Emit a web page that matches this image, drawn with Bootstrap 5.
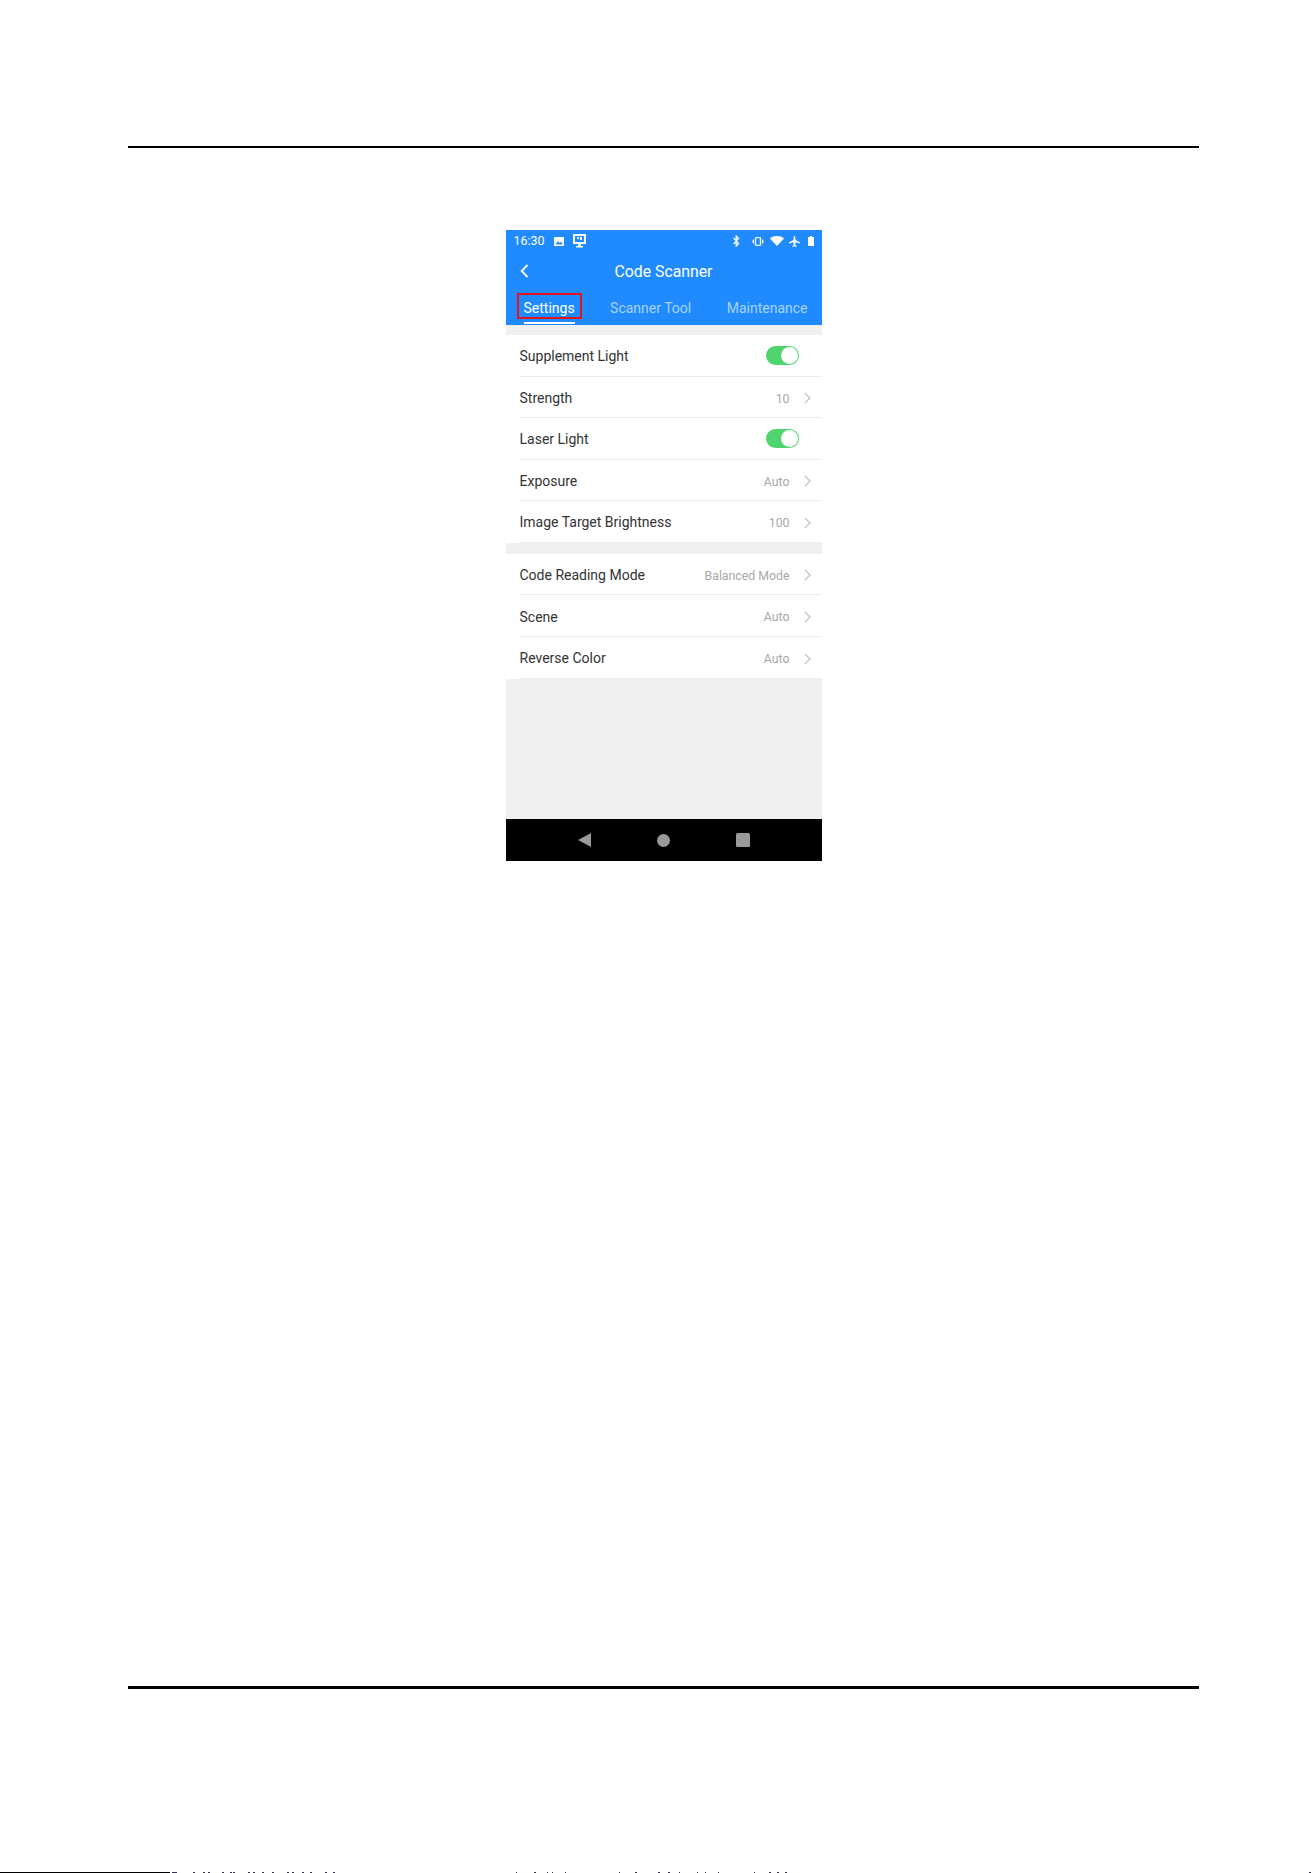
<!DOCTYPE html>
<html lang="en">
<head>
    <meta charset="UTF-8">
    <meta name="viewport" content="width=device-width, initial-scale=1.0">
    <title>Code Scanner</title>
    <link href="https://cdn.jsdelivr.net/npm/bootstrap@5.3.3/dist/css/bootstrap.min.css" rel="stylesheet">
    <style>
        html, body { height: 1873px; overflow: hidden; }
        body { background: #fff; font-family: Roboto, "Liberation Sans", sans-serif; }
        .page-sheet { height: 1873px; padding: 146px 114px 0 128px; }
        .page-rule { height: 3px; background: #000; flex: none; }
        .page-rule-top { height: 2px; margin-bottom: 82px; }
        .page-rule-bottom { margin-top: auto; margin-bottom: 183px; }
        .page-edge { margin: 0 -114px 0 -128px; height: 1px; flex: none; }
        .page-edge svg { display: block; }

        .phone { width: 316px; height: 631px; background: #f0f0f0; flex: none; }
        .phone-head { background: #1f8bff; color: #fff; height: 95px; }
        .status-bar { height: 22px; padding: 0 8px; font-size: 12.4px; }
        .status-time { margin-right: 10px; }
        .status-screen { margin-left: 9px; }
        .status-right { margin-left: auto; }
        .status-vibrate { margin-left: 12px; }
        .status-wifi { margin-left: 6px; }
        .status-plane { margin-left: 5px; }
        .status-battery { margin-left: 8px; }
        .title-bar { height: 40px; font-size: 15.8px; }
        .back-btn { left: 14px; top: 50%; margin-top: -8px; width: 9px; height: 14px; }
        .tab-bar { height: 33px; padding: 0 14px 0 18px; font-size: 14px; }
        .tab-item { color: #a9d2ff; }
        .tab-active { color: #fff; }
        .tab-active::after { content: ""; position: absolute; left: 0; right: 0; bottom: -5px; height: 2px; background: #fff; }
        .tab-mark { left: -7px; right: -7px; top: -5px; bottom: 0; border: 2px solid #e3141c; }

        .set-group { background: #fff; margin-top: 10px; }
        .set-group + .set-group { margin-top: 11px; }
        .set-group + .set-group .set-row { height: 41.7px; }
        .set-row { height: 41.5px; padding-left: 14px; font-size: 14px; color: #333; }
        .set-row-inner { height: 100%; border-bottom: 1px solid #ececec; padding-right: 11px; padding-top: 3px; }
        .set-value { color: #a8a8a8; font-size: 12.3px; margin-right: 14px; margin-left: auto; padding-top: 1px; }
        .set-arrow { width: 7px; height: 12px; display: block; }
        .toggle-on { width: 33px; height: 19px; border-radius: 10px; background: #4fd56f; margin: -2px 12px 0 auto; padding: 1px; }
        .toggle-knob { width: 17px; height: 17px; border-radius: 50%; background: #fff; margin-left: auto; }

        .nav-strip { height: 42px; background: #000; margin-top: auto; }
        .nav-key { width: 79px; }
    </style>
</head>
<body>
    <div class="page-sheet d-flex flex-column">
        <div class="page-rule page-rule-top"></div>

        <div class="d-flex justify-content-center">
            <div class="phone d-flex flex-column">
                <!-- blue header -->
                <div class="phone-head">
                    <div class="status-bar d-flex align-items-center">
                        <span class="status-time">16:30</span>
                        <svg width="10" height="9" viewBox="0 0 10 9"><rect width="10" height="9" rx="1" fill="#fff"/><path d="M1.5 7.5 4 4l1.6 2L7 4.6l1.6 2.9z" fill="#1f8bff"/></svg>
                        <svg class="status-screen" width="13" height="14" viewBox="0 0 13 14"><path d="M0 0h13v10H8v2h2v1.5H3V12h2v-2H0z" fill="#fff"/><rect x="2" y="2" width="9" height="6" fill="#1f8bff"/><path d="M4 3h2v2H4zM7 3h2v3H7z" fill="#fff"/></svg>
                        <div class="status-right d-flex align-items-center">
                            <svg width="7" height="12" viewBox="0 0 7 12"><path d="M.6 3l5 5.4L3.2 11V1l2.4 2.6L.6 9" fill="none" stroke="#fff" stroke-width="1.2"/></svg>
                            <svg class="status-vibrate" width="12" height="9" viewBox="0 0 12 9"><rect x="3.5" y=".7" width="5" height="7.6" rx=".7" fill="none" stroke="#fff" stroke-width="1.3"/><path d="M1.5 2.5v4M0 3.5v2M10.5 2.5v4M12 3.5v2" stroke="#fff" stroke-width="1"/></svg>
                            <svg class="status-wifi" width="14" height="10" viewBox="0 0 14 10"><path d="M0 2.4C3.8-.8 10.2-.8 14 2.4L7 10z" fill="#fff"/></svg>
                            <svg class="status-plane" width="11" height="11" viewBox="0 0 11 11"><path d="M5 0h1l.6 4L11 6.4v1.200L6.600 6.300 6.300 9l1.300 1v1l-2.100-.7-2.100.7v-1l1.300-1-.3-2.700L0 7.600V6.400L4.400 4z" fill="#fff"/></svg>
                            <svg class="status-battery" width="6" height="10" viewBox="0 0 6 10"><path d="M2 0h2v1h2v9H0V1h2z" fill="#fff"/></svg>
                        </div>
                    </div>
                    <div class="title-bar position-relative d-flex align-items-center justify-content-center">
                        <svg class="back-btn position-absolute" viewBox="0 0 9 14"><path d="M7.500 1 1.700 7l5.800 6" fill="none" stroke="#fff" stroke-width="1.800"/></svg>
                        <span>Code Scanner</span>
                    </div>
                    <div class="tab-bar d-flex align-items-center justify-content-between">
                        <span class="tab-item tab-active position-relative">Settings<span class="tab-mark position-absolute"></span></span>
                        <span class="tab-item">Scanner Tool</span>
                        <span class="tab-item">Maintenance</span>
                    </div>
                </div>

                <!-- first group -->
                <div class="set-group">
                    <div class="set-row"><div class="set-row-inner d-flex align-items-center"><span>Supplement Light</span><div class="toggle-on"><div class="toggle-knob"></div></div></div></div>
                    <div class="set-row"><div class="set-row-inner d-flex align-items-center"><span>Strength</span><span class="set-value">10</span><svg class="set-arrow" viewBox="0 0 7 12"><path d="M.8.8 6 6 .8 11.200" fill="none" stroke="#bdbdbd" stroke-width="1.200"/></svg></div></div>
                    <div class="set-row"><div class="set-row-inner d-flex align-items-center"><span>Laser Light</span><div class="toggle-on"><div class="toggle-knob"></div></div></div></div>
                    <div class="set-row"><div class="set-row-inner d-flex align-items-center"><span>Exposure</span><span class="set-value">Auto</span><svg class="set-arrow" viewBox="0 0 7 12"><path d="M.8.8 6 6 .8 11.200" fill="none" stroke="#bdbdbd" stroke-width="1.200"/></svg></div></div>
                    <div class="set-row"><div class="set-row-inner d-flex align-items-center"><span>Image Target Brightness</span><span class="set-value">100</span><svg class="set-arrow" viewBox="0 0 7 12"><path d="M.8.8 6 6 .8 11.200" fill="none" stroke="#bdbdbd" stroke-width="1.200"/></svg></div></div>
                </div>

                <!-- second group -->
                <div class="set-group">
                    <div class="set-row"><div class="set-row-inner d-flex align-items-center"><span>Code Reading Mode</span><span class="set-value">Balanced Mode</span><svg class="set-arrow" viewBox="0 0 7 12"><path d="M.8.8 6 6 .8 11.200" fill="none" stroke="#bdbdbd" stroke-width="1.200"/></svg></div></div>
                    <div class="set-row"><div class="set-row-inner d-flex align-items-center"><span>Scene</span><span class="set-value">Auto</span><svg class="set-arrow" viewBox="0 0 7 12"><path d="M.8.8 6 6 .8 11.200" fill="none" stroke="#bdbdbd" stroke-width="1.200"/></svg></div></div>
                    <div class="set-row"><div class="set-row-inner d-flex align-items-center"><span>Reverse Color</span><span class="set-value">Auto</span><svg class="set-arrow" viewBox="0 0 7 12"><path d="M.8.8 6 6 .8 11.200" fill="none" stroke="#bdbdbd" stroke-width="1.200"/></svg></div></div>
                </div>

                <!-- android keys -->
                <div class="nav-strip d-flex align-items-center justify-content-center">
                    <div class="nav-key d-flex justify-content-center"><svg width="13" height="14" viewBox="0 0 13 14"><path d="M13 0v14L0 7z" fill="#999"/></svg></div>
                    <div class="nav-key d-flex justify-content-center"><svg width="13" height="13" viewBox="0 0 13 13"><circle cx="6.500" cy="6.500" r="6.500" fill="#999"/></svg></div>
                    <div class="nav-key d-flex justify-content-center"><svg width="14" height="14" viewBox="0 0 14 14"><rect width="14" height="14" rx="1.500" fill="#999"/></svg></div>
                </div>
            </div>
        </div>

        <div class="page-rule page-rule-bottom"></div>
        <div class="page-edge">
            <svg width="1313" height="1" viewBox="0 0 1313 1">
                <rect width="170" height="1" fill="#000"/>
                <path d="M172 .5h3M175 .5h2M193 .5h2M203 .5h2M208 .5h2M222 .5h2M230 .5h2M233 .5h2M248 .5h2M253 .5h2M262 .5h2M272 .5h2M287 .5h2M292 .5h2M302 .5h2M310 .5h2M325 .5h2M333 .5h2M516 .5h1M534 .5h2M547 .5h1M552 .5h1M565 .5h1M619 .5h1M635 .5h2M658 .5h2M668 .5h2M679 .5h1M697 .5h1M705 .5h1M718 .5h1M754 .5h1M769 .5h2M777 .5h2M785 .5h2M1309 .5h2" stroke="#335" stroke-width="1"/>
            </svg>
        </div>
    </div>

    <script src="https://cdn.jsdelivr.net/npm/bootstrap@5.3.3/dist/js/bootstrap.bundle.min.js"></script>
</body>
</html>
